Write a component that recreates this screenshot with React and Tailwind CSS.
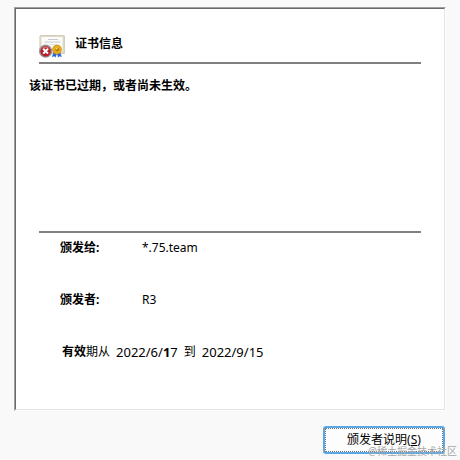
import React from 'react';

function CertificateIcon() {
  return (
    <svg className="block h-6 w-7 shrink-0" viewBox="0 0 28 24" aria-hidden="true">
      <rect x="0.5" y="1" width="25.5" height="19" rx="1.5" fill="#cbc4b3" />
      <rect x="1" y="1.5" width="24.5" height="18" rx="1" fill="#e0d8c6" />
      <rect x="2.5" y="3" width="21" height="14.5" fill="#fbfbf9" />
      <path d="M9 5.5h10M5.5 8h16" stroke="#c4cbd4" strokeWidth="1" />
      <path d="M10 10.5h8" stroke="#dfe3e8" strokeWidth="1" />
      <path d="M14.8 18l-2 5 2.4-.8 1.3 1.4 1.7-4.6zM21 18l1.8 5-2.4-.8-1.4 1.4-1.2-4.6z" fill="#2468dc" />
      <circle cx="18" cy="15.6" r="4.8" fill="#cf960f" />
      <circle cx="18" cy="15.6" r="3.8" fill="#e8b01c" />
      <circle cx="18.2" cy="15.4" r="2" fill="#b67a08" />
      <circle cx="17.6" cy="14.6" r="1" fill="#f6d877" />
      <circle cx="6.6" cy="17.2" r="6.6" fill="#979797" />
      <circle cx="6.6" cy="17.2" r="5.2" fill="#b81f28" />
      <path d="M2.1 15.4a5 5 0 0 1 9 0 9 9 0 0 0-9 0z" fill="#d8686c" />
      <path d="M4.2 14.8l4.8 4.8M9 14.8l-4.8 4.8" stroke="#fff" strokeWidth="2" />
    </svg>
  );
}

function Row({ label, value }) {
  return (
    <div className="flex h-[52px] items-start">
      <dt className="w-[82px] font-bold">{label}</dt>
      <dd>{value}</dd>
    </div>
  );
}

export default function App() {
  return (
    <main className="min-h-screen bg-[#f9f9f9] pt-[7px] pr-[14px] pl-[14px] font-['Noto_Sans','Noto_Sans_CJK_SC',sans-serif] text-xs leading-5 text-black">
      <section className="border border-t-[#a0a0a0] border-r-white border-b-white border-l-[#a0a0a0]">
        <div className="border border-t-[#696969] border-r-[#e3e3e3] border-b-[#e3e3e3] border-l-[#696969] bg-white pb-[47px]">
          <header className="mr-[23px] ml-[23px] flex items-start border-b-2 border-[#808080] pt-[25px] pb-1">
            <CertificateIcon />
            <h1 className="ml-2 font-bold">证书信息</h1>
          </header>

          <p className="mt-3 ml-[13px] h-[155px] font-bold">该证书已过期，或者尚未生效。</p>

          <hr className="mr-[23px] ml-[23px] border-t-2 border-[#808080]" />

          <dl className="mt-[5px] ml-11">
            <Row label="颁发给:" value="*.75.team" />
            <Row label="颁发者:" value="R3" />
          </dl>
          <p className="ml-[46px] flex gap-1.5">
            <span><b>有效</b>期从</span>
            <time className="text-[13px]">2022/6/<b>1</b>7</time>
            <span>到</span>
            <time className="text-[13px]">2022/9/15</time>
          </p>
        </div>
      </section>

      <footer className="relative mt-[15px] flex justify-end">
        <button
          type="button"
          className="mr-px h-7 w-[122px] rounded-[3px] border-2 border-[#5aa9e6] bg-[#fdfdfd]"
        >
          <span className="block h-full border border-dotted border-[#777] leading-[22px]">
            颁发者说明(<u>S</u>)
          </span>
        </button>
        <span className="pointer-events-none absolute top-[15px] -right-[11px] text-[10px] text-[#a8a8a8]">
          @稀土掘金技术社区
        </span>
      </footer>
    </main>
  );
}
